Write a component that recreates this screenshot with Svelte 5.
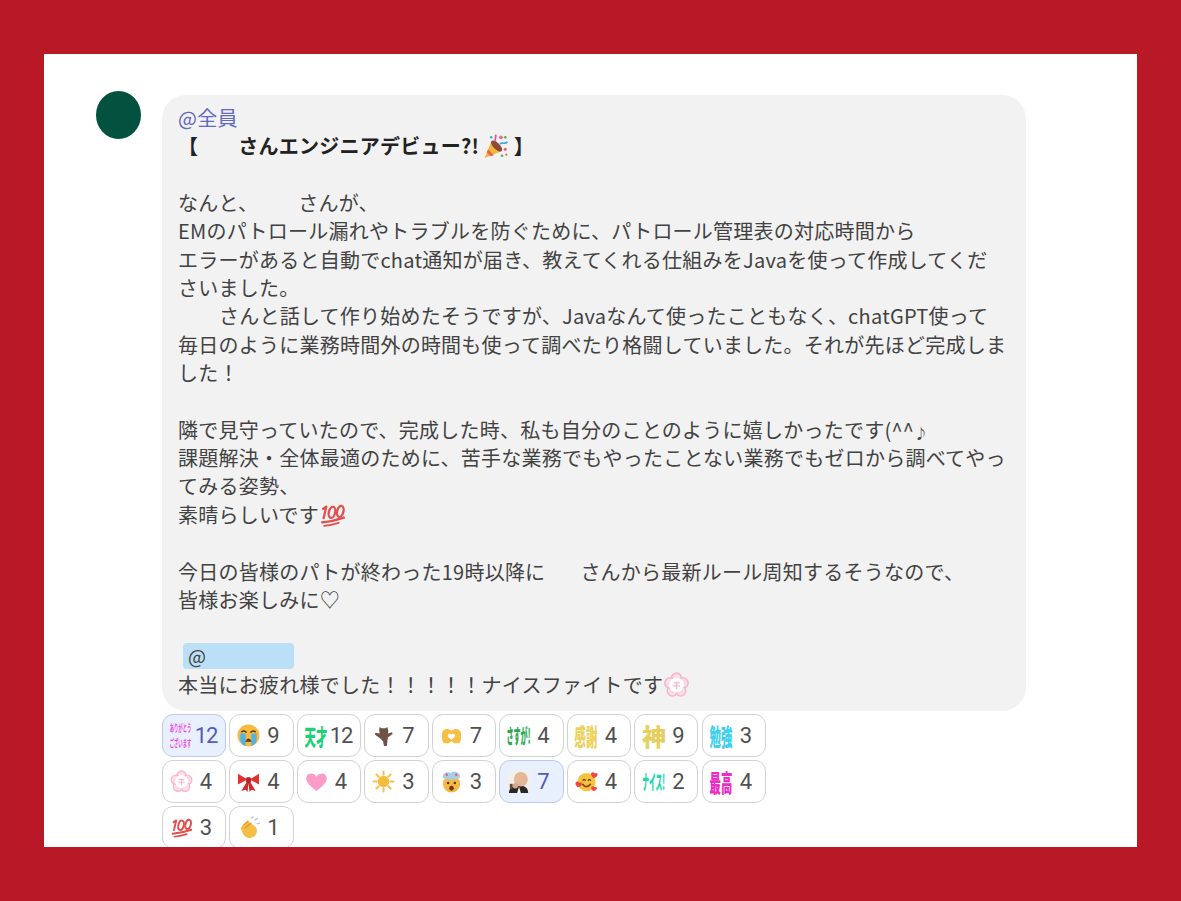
<script>
  const isWide = (n) => n >= 10;
</script>

{#snippet party(cls)}
  <svg class={cls} viewBox="0 0 24 24" aria-hidden="true">
    <path d="M2 23 L8 8 L17 17 Z" fill="#f4b73f"/>
    <path d="M5.2 15 L10.5 20.6 L7.6 21.4 L3.9 18 Z" fill="#e8674e"/>
    <ellipse cx="13" cy="12" rx="3" ry="6.6" transform="rotate(-45 13 12)" fill="#8a4b3a"/>
    <path d="M12 8 C11 5 13 4 12 1.5" fill="none" stroke="#e8577e" stroke-width="1.6"/>
    <path d="M16 10 C19 8 21 11 23 8" fill="none" stroke="#4aa8e0" stroke-width="1.6"/>
    <circle cx="17" cy="4" r="1.7" fill="#e86a9a"/><circle cx="21" cy="4" r="1.3" fill="#58b368"/>
    <circle cx="8" cy="4" r="1.2" fill="#4aa8e0"/><circle cx="21" cy="15" r="1.4" fill="#e8577e"/>
    <circle cx="18" cy="21" r="1.2" fill="#58b368"/><circle cx="22" cy="20" r="1" fill="#e8674e"/>
  </svg>
{/snippet}

{#snippet hundred(cls)}
  <svg class={cls} viewBox="0 0 26 24" aria-hidden="true">
    <g fill="none" stroke="#e2504d" stroke-width="2.2" stroke-linecap="round">
      <path d="M7 4 L4.5 15 M7 4 L4 6"/>
      <ellipse cx="12.5" cy="9.5" rx="3" ry="5.4" transform="rotate(14 12.5 9.5)"/>
      <ellipse cx="20.5" cy="8.5" rx="3" ry="5.4" transform="rotate(14 20.5 8.5)"/>
      <path d="M3 19 C10 18.5 17 17 24 14.5"/>
      <path d="M5 22.5 C10 22 14 21 19 19.5" stroke-width="1.8"/>
    </g>
  </svg>
{/snippet}

{#snippet blossom(cls)}
  <svg class={cls} viewBox="0 0 24 24" aria-hidden="true">
    <g fill="#fbdce7" stroke="#f5b7cd" stroke-width="1.4">
      <circle cx="12" cy="5.8" r="4.8"/><circle cx="18" cy="10.2" r="4.8"/><circle cx="15.7" cy="17.4" r="4.8"/>
      <circle cx="8.3" cy="17.4" r="4.8"/><circle cx="6" cy="10.2" r="4.8"/>
    </g>
    <circle cx="12" cy="12" r="6.8" fill="#fff"/>
    <path d="M9 10 H15 M8.6 12.8 H15.4 M12 9 V16" stroke="#f5b7cd" stroke-width="1.2" fill="none"/>
  </svg>
{/snippet}

{#snippet em(k)}
  {#if k === 'thanks'}
    <span class="txt thanks"><span>ありがとう</span><span>ございます</span></span>
  {:else if k === 'tensai'}
    <span class="txt tensai">天才</span>
  {:else if k === 'sasuga'}
    <span class="txt sasuga">さすが!</span>
  {:else if k === 'kansha'}
    <span class="txt kansha"><span>感謝</span></span>
  {:else if k === 'kami'}
    <span class="txt kami">神</span>
  {:else if k === 'benkyo'}
    <span class="txt benkyo">勉強</span>
  {:else if k === 'nice'}
    <span class="txt nice">ナイス!</span>
  {:else if k === 'saiko'}
    <span class="txt saiko">最高</span>
  {:else if k === 'cry'}
    <svg class="ico" viewBox="0 0 24 24"><circle cx="12" cy="12" r="11.5" fill="#f7b93e"/><path d="M3.5 10 H9 V23 C6 22 3.5 19.5 3.5 17 Z M15 10 H20.5 V17 C20.5 19.5 18 22 15 23 Z" fill="#4fb3e8"/><path d="M4.5 8.5 Q7.5 6 10 9 M14 9 Q16.5 6 19.5 8.5" stroke="#5a3a1e" stroke-width="1.6" fill="none"/><path d="M8.5 18.5 Q12 12 15.5 18.5 Z" fill="#5a3a1e"/></svg>
  {:else if k === 'bear'}
    <svg class="ico" viewBox="0 0 24 24"><path d="M8 3 L10 4.5 H14 L16 3 L17 7 L16.5 10 L21 8.5 L21.5 10.5 L16.5 14 L15.5 23 H12.5 L11.5 18 L9 15.5 L3 11 L3.5 9 L8 10 L7.5 6 Z" fill="#6d5346"/></svg>
  {:else if k === 'hearthands'}
    <svg class="ico" viewBox="0 0 24 24"><path d="M2 11 C2 5 8 3.5 12 7 C16 3.5 22 5 22 11 C22 15 22 18 20 20 H15 L12 18 L9 20 H4 C2 18 2 15 2 11 Z" fill="#f5bf45"/><path d="M12 16.5 C8 14 7.5 11.5 9.2 10.5 C10.4 9.9 11.5 10.6 12 11.6 C12.5 10.6 13.6 9.9 14.8 10.5 C16.5 11.5 16 14 12 16.5 Z" fill="#fff"/></svg>
  {:else if k === 'sakura'}
    {@render blossom('ico')}
  {:else if k === 'ribbon'}
    <svg class="ico" viewBox="0 0 24 24"><path d="M11 10 L1 4 V15 Z M13 10 L23 4 V15 Z" fill="#e5302f"/><path d="M10.5 12 L4.5 22 L9 20.5 L11 23 L12 14 L13 23 L15 20.5 L19.5 22 L13.5 12 Z" fill="#d12a2e"/><rect x="9.5" y="7.5" width="5" height="6" rx="1.5" fill="#b81f26"/></svg>
  {:else if k === 'heart'}
    <svg class="ico" viewBox="0 0 24 24"><path d="M12 22 C3 15 0.5 11 1.5 7 C2.7 2.8 9 2 12 7 C15 2 21.3 2.8 22.5 7 C23.5 11 21 15 12 22 Z" fill="#fb9cc8"/></svg>
  {:else if k === 'sun'}
    <svg class="ico" viewBox="0 0 24 24"><g stroke="#f7c252" stroke-width="2.2" stroke-linecap="round"><path d="M12 1.5 V5 M12 19 V22.5 M1.5 12 H5 M19 12 H22.5 M4.6 4.6 L7 7 M17 17 L19.4 19.4 M4.6 19.4 L7 17 M17 7 L19.4 4.6"/></g><circle cx="12" cy="12" r="6" fill="#f6bc3c"/></svg>
  {:else if k === 'blown'}
    <svg class="ico" viewBox="0 0 24 24"><circle cx="12" cy="14.5" r="9" fill="#f6b846"/><path d="M3 8 C2 3 8 1 11 3 C14 0.5 22 2 21 8 C18 10.5 6 10.5 3 8 Z" fill="#a8cfe8"/><circle cx="7" cy="5" r="1.4" fill="#e5628a"/><circle cx="17" cy="5" r="1.4" fill="#e5628a"/><circle cx="8.5" cy="13.5" r="1.3" fill="#5a3a1e"/><circle cx="15.5" cy="13.5" r="1.3" fill="#5a3a1e"/><ellipse cx="12" cy="19" rx="2.4" ry="2.6" fill="#6d3a1e"/></svg>
  {:else if k === 'baby'}
    <svg class="ico baby" viewBox="0 0 24 24"><rect width="24" height="24" fill="#f3f0ec"/><path d="M1 24 C1 18 6 16 12 16 C18 16 22 18 22 24 Z" fill="#2a2624"/><ellipse cx="14" cy="9" rx="7.6" ry="8" fill="#e3b797"/><circle cx="8" cy="16" r="3" fill="#d8a88a"/><rect x="2" y="14" width="3" height="6" fill="#5a4a40"/><path d="M10 24 L12 17 L14 24 Z" fill="#f5f5f5"/></svg>
  {:else if k === 'hearts'}
    <svg class="ico" viewBox="0 0 24 24"><circle cx="12" cy="12.5" r="9.5" fill="#f8c23f"/><path d="M8 11 Q9.5 9 11 11 M13.5 11 Q15 9 16.5 11" stroke="#5a3a1e" stroke-width="1.4" fill="none"/><path d="M7.5 14.5 Q12 20 16.5 14.5" stroke="#8a4a1e" stroke-width="1.8" fill="none"/><path d="M19.5 8.5 C16 6 16 2.5 18.5 2.3 C19.5 2.2 20.3 3 20.6 3.6 C21.3 3 22 2.8 23 3.3 C24.6 5 23 7.5 19.5 8.5 Z" fill="#ea4a3e"/><path d="M3 18 C-0.5 15.5 0 12 2.5 12 C3.4 12 4 12.7 4.3 13.3 C5 12.7 5.8 12.5 6.8 13 C8 15 6.5 17.5 3 18 Z" fill="#ea4a3e"/><path d="M19 22 C16 20 16.5 17 18.5 17 C19.4 17 20 17.6 20.2 18.1 C20.8 17.6 21.5 17.5 22.4 18 C23.6 19.6 22.2 21.5 19 22 Z" fill="#ea4a3e"/></svg>
  {:else if k === 'hundred'}
    {@render hundred('ico')}
  {:else if k === 'clap'}
    <svg class="ico" viewBox="0 0 24 24"><path d="M4 12 L11 5 L20 12 C22 16 20 22 14 23 C9 23.5 5 19 4 12 Z" fill="#f5bf45"/><path d="M8 13 L15 7 M6 10 L12 5" stroke="#d99a2b" stroke-width="1.2" fill="none"/><path d="M15 2 L17 1 M19 4 L21.5 2.5 M21 8 L23.5 7.5" stroke="#b9c6cf" stroke-width="1.5" stroke-linecap="round"/></svg>
  {/if}
{/snippet}

{#snippet chip(k, n, on)}
  <div class="chip" class:on>
    <span class="em">{@render em(k)}</span>
    <span class="num" class:wide={isWide(n)}>{n}</span>
  </div>
{/snippet}

<div class="page">
  <main class="panel">
    <div class="avatar"></div>
    <div class="col">
      <section class="bubble">
        <div class="l mention">@全員</div>
        <div class="l title">【<i class="sp t"></i>さんエンジニアデビュー?! {@render party('inl pop')}】</div>
        <div class="l"></div>
        <div class="l">なんと、<i class="sp a"></i>さんが、</div>
        <div class="l">EMのパトロール漏れやトラブルを防ぐために、パトロール管理表の対応時間から</div>
        <div class="l">エラーがあると自動でchat通知が届き、教えてくれる仕組みをJavaを使って作成してくだ</div>
        <div class="l">さいました。</div>
        <div class="l"><i class="sp b"></i>さんと話して作り始めたそうですが、Javaなんて使ったこともなく、chatGPT使って</div>
        <div class="l">毎日のように業務時間外の時間も使って調べたり格闘していました。それが先ほど完成しま</div>
        <div class="l">した！</div>
        <div class="l"></div>
        <div class="l">隣で見守っていたので、完成した時、私も自分のことのように嬉しかったです(^^<span class="note">♪</span></div>
        <div class="l">課題解決・全体最適のために、苦手な業務でもやったことない業務でもゼロから調べてやっ</div>
        <div class="l">てみる姿勢、</div>
        <div class="l">素晴らしいです{@render hundred('inl')}</div>
        <div class="l"></div>
        <div class="l">今日の皆様のパトが終わった19時以降に<i class="sp c"></i>さんから最新ルール周知するそうなので、</div>
        <div class="l">皆様お楽しみに♡</div>
        <div class="l"></div>
        <div class="l"><span class="tag">@</span></div>
        <div class="l">本当にお疲れ様でした！！！！！ナイスファイトです{@render blossom('inl')}</div>
      </section>
      <div class="chips">
        {@render chip('thanks', 12, true)}
        {@render chip('cry', 9)}
        {@render chip('tensai', 12)}
        {@render chip('bear', 7)}
        {@render chip('hearthands', 7)}
        {@render chip('sasuga', 4)}
        {@render chip('kansha', 4)}
        {@render chip('kami', 9)}
        {@render chip('benkyo', 3)}
        {@render chip('sakura', 4)}
        {@render chip('ribbon', 4)}
        {@render chip('heart', 4)}
        {@render chip('sun', 3)}
        {@render chip('blown', 3)}
        {@render chip('baby', 7, true)}
        {@render chip('hearts', 4)}
        {@render chip('nice', 2)}
        {@render chip('saiko', 4)}
        {@render chip('hundred', 3)}
        {@render chip('clap', 1)}
      </div>
    </div>
  </main>
</div>

<style>
  :global(body) { margin: 0; background: #b91827; }
  .page { height: 901px; padding: 54px 44px; box-sizing: border-box; }
  .panel {
    height: 793px; background: #fff; display: flex; align-items: flex-start;
    padding: 37px 0 0 52px; box-sizing: border-box; gap: 21px; overflow: hidden;
  }
  .avatar { width: 45px; height: 48px; border-radius: 50%; background: #02523f; flex: none; }
  .col { width: 864px; padding-top: 4px; }
  .bubble {
    background: #f2f2f2; border-radius: 24px; height: 616px; box-sizing: border-box;
    padding: 9px 16px 0; font: 400 20px/28.35px "Noto Sans CJK JP", "Noto Sans", sans-serif;
    color: #424242; letter-spacing: 0.24px;
  }
  .l { height: 28.35px; white-space: nowrap; }
  .mention { color: #6468c4; }
  .title { font-weight: 700; color: #222; }
  .sp { display: inline-block; }
  .sp.t { width: 40px; }
  .sp.a { width: 40px; }
  .sp.b { width: 41px; }
  .sp.c { width: 35px; }
  .note { font-size: 14px; font-weight: 700; }
  .tag {
    display: inline-block; width: 111px; height: 26px; margin-left: 5px; padding-left: 5px;
    box-sizing: border-box; background: #bbdff7; border-radius: 4px; font-size: 19px; line-height: 26px;
    vertical-align: top;
  }
  .inl { width: 27px; height: 26px; vertical-align: -5px; }
  .pop { margin: 0 5px 0 -2px; }
  .chips { display: flex; flex-wrap: wrap; gap: 3px 3.4px; margin-top: 3px; width: 610px; }
  .chip {
    width: 64.1px; height: 43px; box-sizing: border-box; display: flex; align-items: center;
    border: 1.5px solid #d2d2d2; border-radius: 11px; background: #fff; padding-left: 6px;
  }
  .chip.on { background: #e9f0fd; border-color: #bccbe9; }
  .em { width: 25px; height: 26px; flex: none; display: flex; align-items: center; justify-content: center; overflow: visible; }
  .num {
    flex: 1; text-align: center; font: 400 22px/1 Roboto, "Noto Sans", sans-serif; color: #505050; padding-right: 7px;
  }
  .num.wide { letter-spacing: -1px; }
  .on .num { color: #5559c0; }
  .ico { width: 23px; height: 23px; }
  .baby { width: 22px; height: 24px; }
  .txt {
    display: inline-flex; flex-direction: column; align-items: center; justify-content: center; flex: none;
    font-family: "Noto Sans CJK JP", sans-serif; font-weight: 900; line-height: 1; white-space: nowrap;
  }
  .thanks { color: #e64ce0; font-size: 7px; font-weight: 700; line-height: 11px; transform: scale(0.62, 1.4); margin-left: -2px; width: 25px; }
  .tensai { color: #1fd07a; font-size: 12px; transform: scale(0.95, 1.8); }
  .sasuga { color: #2ea84f; font-size: 9px; transform: scale(0.78, 2.3); width: 25px; }
  .kansha { color: #ecd25a; font-size: 12px; transform: scale(0.95, 2); }
  .kami { color: #e6cf60; font-size: 24px; }
  .benkyo { color: #3fd0ee; font-size: 12px; transform: scale(0.95, 2); }
  .nice { color: #21d6b0; font-size: 9px; transform: scale(0.75, 2.3); width: 25px; }
  .saiko { color: #ee2bc5; font-size: 12px; transform: scale(0.95, 2); }
</style>
